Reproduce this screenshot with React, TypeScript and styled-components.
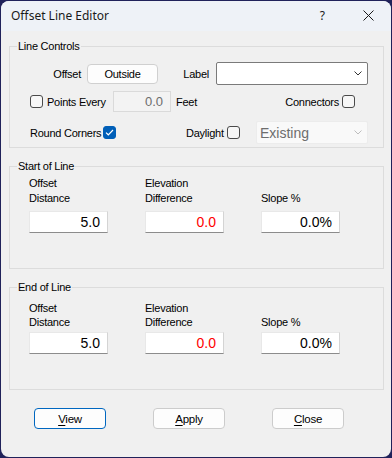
import React from "react";
import styled, { createGlobalStyle } from "styled-components";

const Global = createGlobalStyle`
  html, body { margin: 0; padding: 0; background: #20225a; }
  body {
    width: 392px; height: 458px; overflow: hidden;
    font-family: "Liberation Sans", Arial, sans-serif;
    font-size: 11px; color: #000;
    letter-spacing: -0.25px;
  }
  * { box-sizing: border-box; }
`;

const Window = styled.div`
  margin: 1px;
  width: 390px;
  height: 456px;
  background: #f0f0f0;
  border-radius: 8px;
  overflow: hidden;
  display: flex;
  flex-direction: column;
`;

const TitleBar = styled.div`
  height: 30px;
  flex: none;
  background: #eef2f7;
  display: flex;
  align-items: center;
  padding: 0 17px 1px 10px;
  font-family: "Noto Sans", "Liberation Sans", sans-serif;
  font-size: 12px;
  letter-spacing: 0;
  color: #1a1a1a;
`;

const Title = styled.div`
  flex: 1;
  line-height: 16px;
`;

const Help = styled.div`
  line-height: 16px;
  margin-right: 38px;
`;

const Body = styled.div`
  flex: 1;
  display: flex;
  flex-direction: column;
  padding: 15px 7px 0 8px;
`;

const Group = styled.div<{ $h: number; $top?: number }>`
  position: relative;
  border: 1px solid #dcdcdc;
  height: ${(p) => p.$h}px;
  margin-top: ${(p) => p.$top ?? 0}px;
  flex: none;
`;

const Legend = styled.span`
  position: absolute;
  top: -7px;
  left: 7px;
  padding: 0 1px;
  background: #f0f0f0;
  line-height: 13px;
`;

const Controls = styled.div`
  padding-top: 15px;
  display: flex;
  flex-direction: column;
`;

const Row = styled.div<{ $h: number; $top?: number }>`
  display: flex;
  align-items: center;
  height: ${(p) => p.$h}px;
  margin-top: ${(p) => p.$top ?? 0}px;
`;

const Text = styled.span<{ $w?: number; $right?: boolean; $ml?: number; $grow?: boolean }>`
  display: inline-block;
  white-space: nowrap;
  line-height: 14px;
  ${(p) => (p.$w ? `width: ${p.$w}px; flex: none;` : "")}
  ${(p) => (p.$grow ? "flex: 1;" : "")}
  text-align: ${(p) => (p.$right ? "right" : "left")};
  margin-left: ${(p) => p.$ml ?? 0}px;
`;

const PushButton = styled.div<{ $w: number; $ml?: number }>`
  width: ${(p) => p.$w}px;
  height: 20px;
  margin-left: ${(p) => p.$ml ?? 0}px;
  flex: none;
  background: #fdfdfd;
  border: 1px solid #d0d0d0;
  border-radius: 4px;
  display: flex;
  align-items: center;
  justify-content: center;
  line-height: 14px;
`;

const Combo = styled.div<{ $w: number; $ml?: number; $disabled?: boolean }>`
  width: ${(p) => p.$w}px;
  height: 23px;
  margin-left: ${(p) => p.$ml ?? 0}px;
  flex: none;
  background: ${(p) => (p.$disabled ? "#f9f9f9" : "#ffffff")};
  border: 1px solid ${(p) => (p.$disabled ? "#ececec" : "#7a7a7a")};
  border-radius: 2px;
  display: flex;
  align-items: center;
  padding: 0 5px 0 3px;
  color: #6d6d6d;
  font-size: 14px;
  letter-spacing: 0;
`;

const ComboText = styled.span`
  flex: 1;
  line-height: 16px;
`;

const Check = styled.div<{ $checked?: boolean; $ml?: number }>`
  width: 13px;
  height: 13px;
  flex: none;
  margin-left: ${(p) => p.$ml ?? 0}px;
  border-radius: 3px;
  border: 1px solid ${(p) => (p.$checked ? "#005fb8" : "#4a4a4a")};
  background: ${(p) => (p.$checked ? "#005fb8" : "#f7f7f7")};
  display: flex;
  align-items: center;
  justify-content: center;
`;

const SmallField = styled.div`
  width: 58px;
  height: 21px;
  flex: none;
  background: #f3f3f3;
  border: 1px solid #dadada;
  color: #6d6d6d;
  font-size: 13px;
  letter-spacing: 0;
  text-align: right;
  padding-right: 7px;
  line-height: 19px;
`;

const Columns = styled.div<{ $pt: number }>`
  padding: ${(p) => p.$pt}px 0 0 19px;
  display: grid;
  grid-template-columns: 79px 79px 79px;
  column-gap: 37px;
`;

const Column = styled.div`
  display: flex;
  flex-direction: column;
`;

const ColLabel = styled.div<{ $lh: number; $mb: number }>`
  height: 30px;
  line-height: ${(p) => p.$lh}px;
  display: flex;
  flex-direction: column;
  justify-content: flex-end;
  margin-bottom: ${(p) => p.$mb}px;
`;

const ValueBox = styled.div<{ $color?: string }>`
  height: 22px;
  background: #ffffff;
  border: 1px solid #e8e8e8;
  border-bottom: 1px solid #8c8c8c;
  border-right-color: #d4d4d4;
  text-align: right;
  padding-right: 7px;
  font-size: 14px;
  letter-spacing: 0;
  line-height: 20px;
  color: ${(p) => p.$color ?? "#000"};
`;

const ButtonRow = styled.div`
  display: flex;
  gap: 47px;
  padding-left: 25px;
  margin-top: 18px;
`;

const DialogButton = styled.div<{ $focus?: boolean }>`
  width: 72px;
  height: 21px;
  background: #fdfdfd;
  border: 1px solid ${(p) => (p.$focus ? "#0067c0" : "#cccccc")};
  border-radius: 4px;
  display: flex;
  align-items: center;
  justify-content: center;
  line-height: 14px;
  font-size: 11.5px;
  u { text-decoration: underline; text-underline-offset: 2px; }
`;

const Chevron = ({ color }: { color: string }) => (
  <svg width="8" height="5" viewBox="0 0 8 5">
    <path d="M0.5 0.5 L4 4 L7.5 0.5" fill="none" stroke={color} strokeWidth="1" />
  </svg>
);

const Tick = () => (
  <svg width="9" height="7" viewBox="0 0 9 7">
    <path d="M1 3.6 L3.3 5.8 L8 1" fill="none" stroke="#ffffff" strokeWidth="1.2" />
  </svg>
);

const CloseX = () => (
  <svg width="11" height="11" viewBox="0 0 11 11">
    <path d="M0.5 0.5 L10.5 10.5 M10.5 0.5 L0.5 10.5" stroke="#1a1a1a" strokeWidth="1" fill="none" />
  </svg>
);

type Col = { l1?: string; l2: string; value: string; color?: string };

const cols: Col[] = [
  { l1: "Offset", l2: "Distance", value: "5.0" },
  { l1: "Elevation", l2: "Difference", value: "0.0", color: "#ff0000" },
  { l2: "Slope %", value: "0.0%" },
];

const LineGroup = ({
  title,
  top,
  pt,
  lh,
  mb,
}: {
  title: string;
  top: number;
  pt: number;
  lh: number;
  mb: number;
}) => (
  <Group $h={103} $top={top}>
    <Legend>{title}</Legend>
    <Columns $pt={pt}>
      {cols.map((c) => (
        <Column key={c.l2}>
          <ColLabel $lh={lh} $mb={mb}>
            {c.l1 && <span>{c.l1}</span>}
            <span>{c.l2}</span>
          </ColLabel>
          <ValueBox $color={c.color}>{c.value}</ValueBox>
        </Column>
      ))}
    </Columns>
  </Group>
);

export default function App() {
  return (
    <>
      <Global />
      <Window>
        <TitleBar>
          <Title>Offset Line Editor</Title>
          <Help>?</Help>
          <CloseX />
        </TitleBar>
        <Body>
          <Group $h={102}>
            <Legend>Line Controls</Legend>
            <Controls>
              <Row $h={23}>
                <Text $w={71} $right>Offset</Text>
                <PushButton $w={71} $ml={6}>Outside</PushButton>
                <Text $w={51} $right>Label</Text>
                <Combo $w={152} $ml={7}>
                  <ComboText />
                  <Chevron color="#333333" />
                </Combo>
              </Row>
              <Row $h={21} $top={6}>
                <Check $ml={20} />
                <Text $w={66} $ml={4}>Points Every</Text>
                <SmallField>0.0</SmallField>
                <Text $ml={5}>Feet</Text>
                <Text $grow $right>Connectors</Text>
                <Check $ml={3} />
                <Text $w={28} />
              </Row>
              <Row $h={23} $top={9}>
                <Text $w={73} $ml={20}>Round Corners</Text>
                <Check $checked>
                  <Tick />
                </Check>
                <Text $w={41} $ml={70}>Daylight</Text>
                <Check />
                <Combo $w={112} $ml={16} $disabled>
                  <ComboText>Existing</ComboText>
                  <Chevron color="#bdbdbd" />
                </Combo>
              </Row>
            </Controls>
          </Group>
          <LineGroup title="Start of Line" top={18} pt={9} lh={15} mb={5} />
          <LineGroup title="End of Line" top={18} pt={11} lh={14} mb={3} />
          <ButtonRow>
            <DialogButton $focus>
              <span><u>V</u>iew</span>
            </DialogButton>
            <DialogButton>
              <span><u>A</u>pply</span>
            </DialogButton>
            <DialogButton>
              <span><u>C</u>lose</span>
            </DialogButton>
          </ButtonRow>
        </Body>
      </Window>
    </>
  );
}
